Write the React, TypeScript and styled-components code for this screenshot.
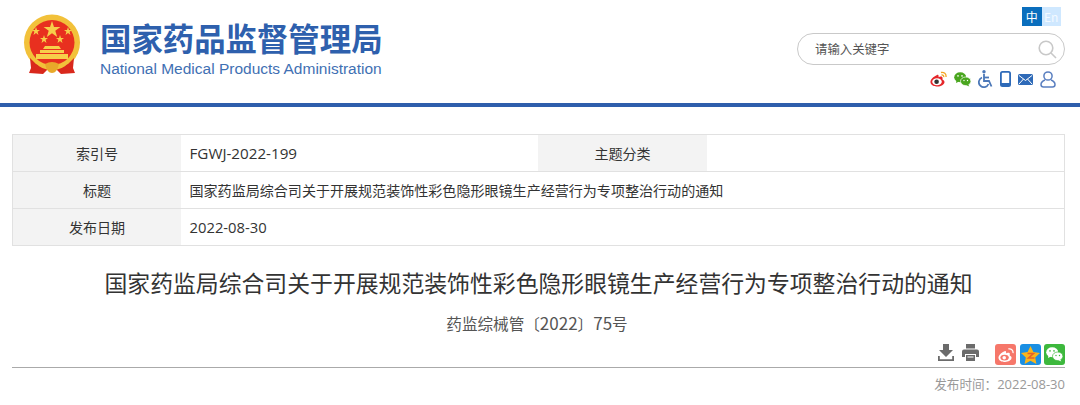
import React from "react";
import styled, { createGlobalStyle } from "styled-components";

const Global = createGlobalStyle`
  html, body { margin: 0; padding: 0; background: #fff; }
  body { font-family: "Open Sans", "Noto Sans CJK SC", "Noto Sans", sans-serif; color: #333; overflow: hidden; }
`;
const Page = styled.div`width: 1080px; height: 405px; overflow: hidden;`;
const Header = styled.header`
  height: 103px; border-bottom: 4px solid #2e5eac; display: flex; justify-content: space-between;
  padding: 0 15px 0 23px;
`;
const Brand = styled.div`display: flex; gap: 19px; padding-top: 14px;`;
const BrandText = styled.div`display: flex; flex-direction: column; padding-top: 4px;`;
const BrandName = styled.div`
  font: 700 31.4px/40px "Noto Sans CJK SC", sans-serif; color: #2e60ad; white-space: nowrap; height: 40px;
`;
const BrandEn = styled.div`
  font: 400 15.5px/20px "Liberation Sans", sans-serif; color: #3f70b3; white-space: nowrap; margin-top: 1px;
`;
const Tools = styled.div`width: 268px; display: flex; flex-direction: column; align-items: flex-end;`;
const Lang = styled.div`display: flex; margin: 7px 4px 0 0;`;
const LangItem = styled.span<{ $on?: boolean }>`
  width: 19.5px; height: 19px; display: flex; align-items: center; justify-content: center;
  font: 400 12px/19px "Noto Sans CJK SC", sans-serif;
  background: ${p => (p.$on ? "#0a6ebd" : "#cfe8ff")}; color: ${p => (p.$on ? "#fff" : "#f4faff")};
`;
const Search = styled.div`
  box-sizing: border-box; width: 268px; height: 32px; margin-top: 7px; border: 1.5px solid #c9c9c9; border-radius: 16px;
  display: flex; align-items: center; justify-content: space-between; padding: 0 7px 0 17px;
  font: 400 12.4px/18px "Noto Sans CJK SC", sans-serif; color: #555;
`;
const IconRow = styled.div`display: flex; align-items: center; margin: 5px 9px 0 0; gap: 7px;`;
const Main = styled.main`padding: 27px 15px 0 12px;`;
const Table = styled.div`
  border: 1px solid #e1e1e1; display: grid; grid-template-columns: 168px 357px 169px 1fr;
  grid-template-rows: 37px 37px 36px; font-size: 14.05px; box-sizing: border-box; height: 112px;
`;
const Label = styled.div<{ $last?: boolean }>`
  background: #f3f3f3; display: flex; align-items: center; justify-content: center; color: #333;
  ${p => (p.$last ? "" : "border-bottom: 1px solid #e1e1e1;")}
`;
const Value = styled.div<{ $span?: number; $last?: boolean }>`
  display: flex; align-items: center; padding-left: 8.500px; color: #333; white-space: nowrap;
  ${p => (p.$span ? `grid-column: span ${p.$span};` : "")}
  ${p => (p.$last ? "" : "border-bottom: 1px solid #e1e1e1;")}
`;
const Latin = styled.span<{ $size: number }>`font-size: ${p => p.$size}px;`;
const Title = styled.h1`
  margin: 17px 0 0; font: 400 22.85px/38px "Noto Sans CJK SC", sans-serif; color: #333; text-align: center; white-space: nowrap;
`;
const DocNo = styled.div`margin-top: 11px; text-align: center; font: 400 15.6px/22px "Noto Sans CJK SC", sans-serif; color: #555; padding-right: 3px;`;
const Actions = styled.div`
  margin-top: 7px; display: flex; justify-content: flex-end; align-items: flex-start;
  border-bottom: 1px solid #aaa; padding-top: 3px; box-sizing: border-box; height: 27px;
`;
const ActionGap = styled.div`width: 5px;`;
const Tool = styled.span`display: flex; margin-right: 8px;`;
const Tile = styled.span<{ $bg: string }>`
  width: 21px; height: 21px; border-radius: 3px; background: ${p => p.$bg}; display: flex; align-items: center; justify-content: center; margin-left: 3.5px;
`;
const Published = styled.div`text-align: right; margin-top: 7px; font-size: 12.6px; line-height: 18px; color: #999;`;

const Emblem = () => (
  <svg width="58" height="61" viewBox="0 0 58 61">
    <circle cx="29" cy="28.500" r="28" fill="#f2c13a" />
    <circle cx="29" cy="28.500" r="22.500" fill="#e8301f" />
    <polygon points="29,7 31,13 37.400,13 32.300,16.800 34.200,23 29,19.200 23.800,23 25.700,16.800 20.600,13 27,13" fill="#f7cf4a" />
    <g fill="#f7cf4a">
      <polygon points="13,13 14,16 17,16 14.600,17.800 15.500,21 13,19 10.500,21 11.400,17.800 9,16 12,16" />
      <polygon points="45,13 46,16 49,16 46.600,17.800 47.500,21 45,19 42.500,21 43.400,17.800 41,16 44,16" />
      <polygon points="21,21 22,24 25,24 22.600,25.800 23.500,29 21,27 18.500,29 19.400,25.800 17,24 20,24" />
      <polygon points="37,21 38,24 41,24 38.600,25.800 39.500,29 37,27 34.500,29 35.400,25.800 33,24 36,24" />
      <path d="M22 32h14l2 3H20z" /><path d="M17 36h24v3H17z" /><path d="M13 40h32v5H13z" />
    </g>
    <path d="M7 44 L13 50 L25 55 L20 60 L6 59 L8 54z" fill="#d9281c" />
    <path d="M51 44 L45 50 L33 55 L38 60 L52 59 L50 54z" fill="#d9281c" />
    <path d="M12 45q7 8 17 8t17-8v3q-6 8-17 8t-17-8z" fill="#f2c13a" />
    <path d="M22 50q7-4 14 0q-2 9-7 9t-7-9z" fill="#e8a92a" />
  </svg>
);
const SearchIcon = () => (
  <svg width="19" height="19" viewBox="0 0 19 19" fill="none" stroke="#c8c8c8" strokeWidth="1.600">
    <circle cx="8" cy="8" r="6.800" /><path d="M13 13l5 5" />
  </svg>
);
const Weibo = () => (
  <svg width="17" height="16" viewBox="0 0 17 16">
    <path d="M7 4C3.500 5.500 0 8.500 .5 11.500 1.200 15 5 15.500 7.500 15.500c3.500 0 7-2 7-4.500 0-1.800-1.800-2-2-2.500-.2-.6.500-1.800-.3-2.600-1-.8-3 .1-3.700.3.200-.7.300-1.800-.3-2.300C7.900 3.600 7.400 3.800 7 4z" fill="#e5262a" />
    <ellipse cx="7" cy="10.700" rx="4.800" ry="3.500" fill="#fff" />
    <circle cx="6.600" cy="10.800" r="2.300" fill="#333" />
    <path d="M11 1.500c3 -.8 5.500 1.500 5 4.500M11.500 4c1.500-.3 2.500 .8 2.200 2.200" fill="none" stroke="#f4a623" strokeWidth="1.300" />
  </svg>
);
const Wechat = ({ fg = "#4aa61f", eye = "#fff", size = 17 }: { fg?: string; eye?: string; size?: number }) => (
  <svg width={size} height={size * 15 / 17} viewBox="0 0 17 15">
    <ellipse cx="6.200" cy="5.200" rx="6" ry="5" fill={fg} />
    <path d="M2.500 8l-.5 3 3-1.600z" fill={fg} />
    <ellipse cx="11.700" cy="9.300" rx="5.200" ry="4.300" stroke={eye} strokeWidth=".7" fill={fg} />
    <path d="M14 12l1.300 2.500-3.300-1.500z" fill={fg} />
    <g fill={eye}><circle cx="4" cy="3.900" r=".8" /><circle cx="8" cy="3.900" r=".8" /><circle cx="10" cy="8.500" r=".7" /><circle cx="13.500" cy="8.500" r=".7" /></g>
  </svg>
);
const Wheelchair = () => (
  <svg width="15" height="18" viewBox="0 0 15 18" fill="none" stroke="#4c78b8" strokeWidth="1.800">
    <circle cx="6" cy="1.800" r="1.700" fill="#4c78b8" stroke="none" />
    <path d="M6 4v7h5l2.500 5.500" />
    <path d="M6 7.500h5" />
    <path d="M4 7.500a5 5 0 1 0 6.500 6.500" />
  </svg>
);
const Phone = () => (
  <svg width="11" height="16" viewBox="0 0 11 16" fill="none">
    <rect x=".9" y=".9" width="9.200" height="14.200" rx="1.600" stroke="#2e6ab8" strokeWidth="1.800" />
    <rect x="1" y="12" width="9" height="3" fill="#2e6ab8" />
  </svg>
);
const Mail = () => (
  <svg width="15" height="11" viewBox="0 0 15 11">
    <rect width="15" height="11" rx="1.500" fill="#2e6ab8" />
    <path d="M1 1.500l6.500 5 6.500-5M1 10l4.500-5M14 10L9.500 5" fill="none" stroke="#fff" strokeWidth="1" />
  </svg>
);
const User = () => (
  <svg width="16" height="17" viewBox="0 0 16 17" fill="none" stroke="#5a7fc0" strokeWidth="1.500">
    <circle cx="8" cy="5" r="4.100" />
    <path d="M5 9C2.500 10 1 11.500 1 13.500 1 15.200 2 16 3.500 16h9c1.500 0 2.500-.8 2.500-2.500 0-2-1.500-3.500-4-4.500" />
  </svg>
);
const Download = () => (
  <svg width="16" height="17" viewBox="0 0 16 17" fill="#6b6b6b">
    <path d="M5 0h6v6h4l-7 7-7-7h4z" />
    <path d="M0 12h1.800v3.200h12.400V12H16v5H0z" />
  </svg>
);
const Printer = () => (
  <svg width="17" height="17" viewBox="0 0 17 17" fill="#6b6b6b">
    <path d="M4 0h9v4.500H4z" />
    <path d="M2 5.500h13a2 2 0 0 1 2 2V13h-3v-3H3v3H0V7.500a2 2 0 0 1 2-2z" />
    <path d="M4 11h9v6H4zM5.500 12.500v1h6v-1z" fillRule="evenodd" />
  </svg>
);
const WeiboWhite = () => (
  <svg width="16" height="14" viewBox="0 0 17 15">
    <path d="M7 3.500C3.500 5 0 8 .5 11 1.200 14.500 5 15 7.500 15c3.500 0 7-2 7-4.500 0-1.800-1.800-2-2-2.500-.2-.6.500-1.800-.3-2.600-1-.8-3 .1-3.700.3.200-.7.300-1.800-.3-2.300C7.900 3.100 7.400 3.300 7 3.500z" fill="#fff" />
    <ellipse cx="7" cy="10.300" rx="4.500" ry="3.200" fill="#f6776a" />
    <circle cx="6.600" cy="10.400" r="1.900" fill="#fff" />
    <path d="M11 1c3-.8 5.500 1.500 5 4.500" fill="none" stroke="#fff" strokeWidth="1.300" />
  </svg>
);
const Star = () => (
  <svg width="19" height="18" viewBox="0 0 19 18">
    <polygon points="9.500,0 12.400,6 19,6.900 14.200,11.400 15.400,18 9.500,14.800 3.600,18 4.800,11.400 0,6.900 6.600,6" fill="#f9b51c" />
    <path d="M6.500 7.500h6l-5 4.500h6" fill="none" stroke="#e5622a" strokeWidth="1.600" />
  </svg>
);

export default function App() {
  return (
    <Page>
      <Global />
      <Header>
        <Brand>
          <Emblem />
          <BrandText>
            <BrandName>国家药品监督管理局</BrandName>
            <BrandEn>National Medical Products Administration</BrandEn>
          </BrandText>
        </Brand>
        <Tools>
          <Lang>
            <LangItem $on>中</LangItem>
            <LangItem>En</LangItem>
          </Lang>
          <Search>请输入关键字<SearchIcon /></Search>
          <IconRow>
            <Weibo /><Wechat /><Wheelchair /><Phone /><Mail /><User />
          </IconRow>
        </Tools>
      </Header>
      <Main>
        <Table>
          <Label>索引号</Label>
          <Value><Latin $size={15.2}>FGWJ-2022-199</Latin></Value>
          <Label>主题分类</Label>
          <Value />
          <Label>标题</Label>
          <Value $span={3}>国家药监局综合司关于开展规范装饰性彩色隐形眼镜生产经营行为专项整治行动的通知</Value>
          <Label $last>发布日期</Label>
          <Value $span={3} $last><Latin $size={14.8}>2022-08-30</Latin></Value>
        </Table>
        <Title>国家药监局综合司关于开展规范装饰性彩色隐形眼镜生产经营行为专项整治行动的通知</Title>
        <DocNo>药监综械管〔<Latin $size={17}>2022</Latin>〕<Latin $size={17}>75</Latin>号</DocNo>
        <Actions>
          <Tool><Download /></Tool>
          <Tool><Printer /></Tool>
          <ActionGap />
          <Tile $bg="#f6776a"><WeiboWhite /></Tile>
          <Tile $bg="#1a8fe3"><Star /></Tile>
          <Tile $bg="#3db83d"><Wechat fg="#fff" eye="#3db83d" size={17} /></Tile>
        </Actions>
        <Published>发布时间：<Latin $size={13}>2022-08-30</Latin></Published>
      </Main>
    </Page>
  );
}
